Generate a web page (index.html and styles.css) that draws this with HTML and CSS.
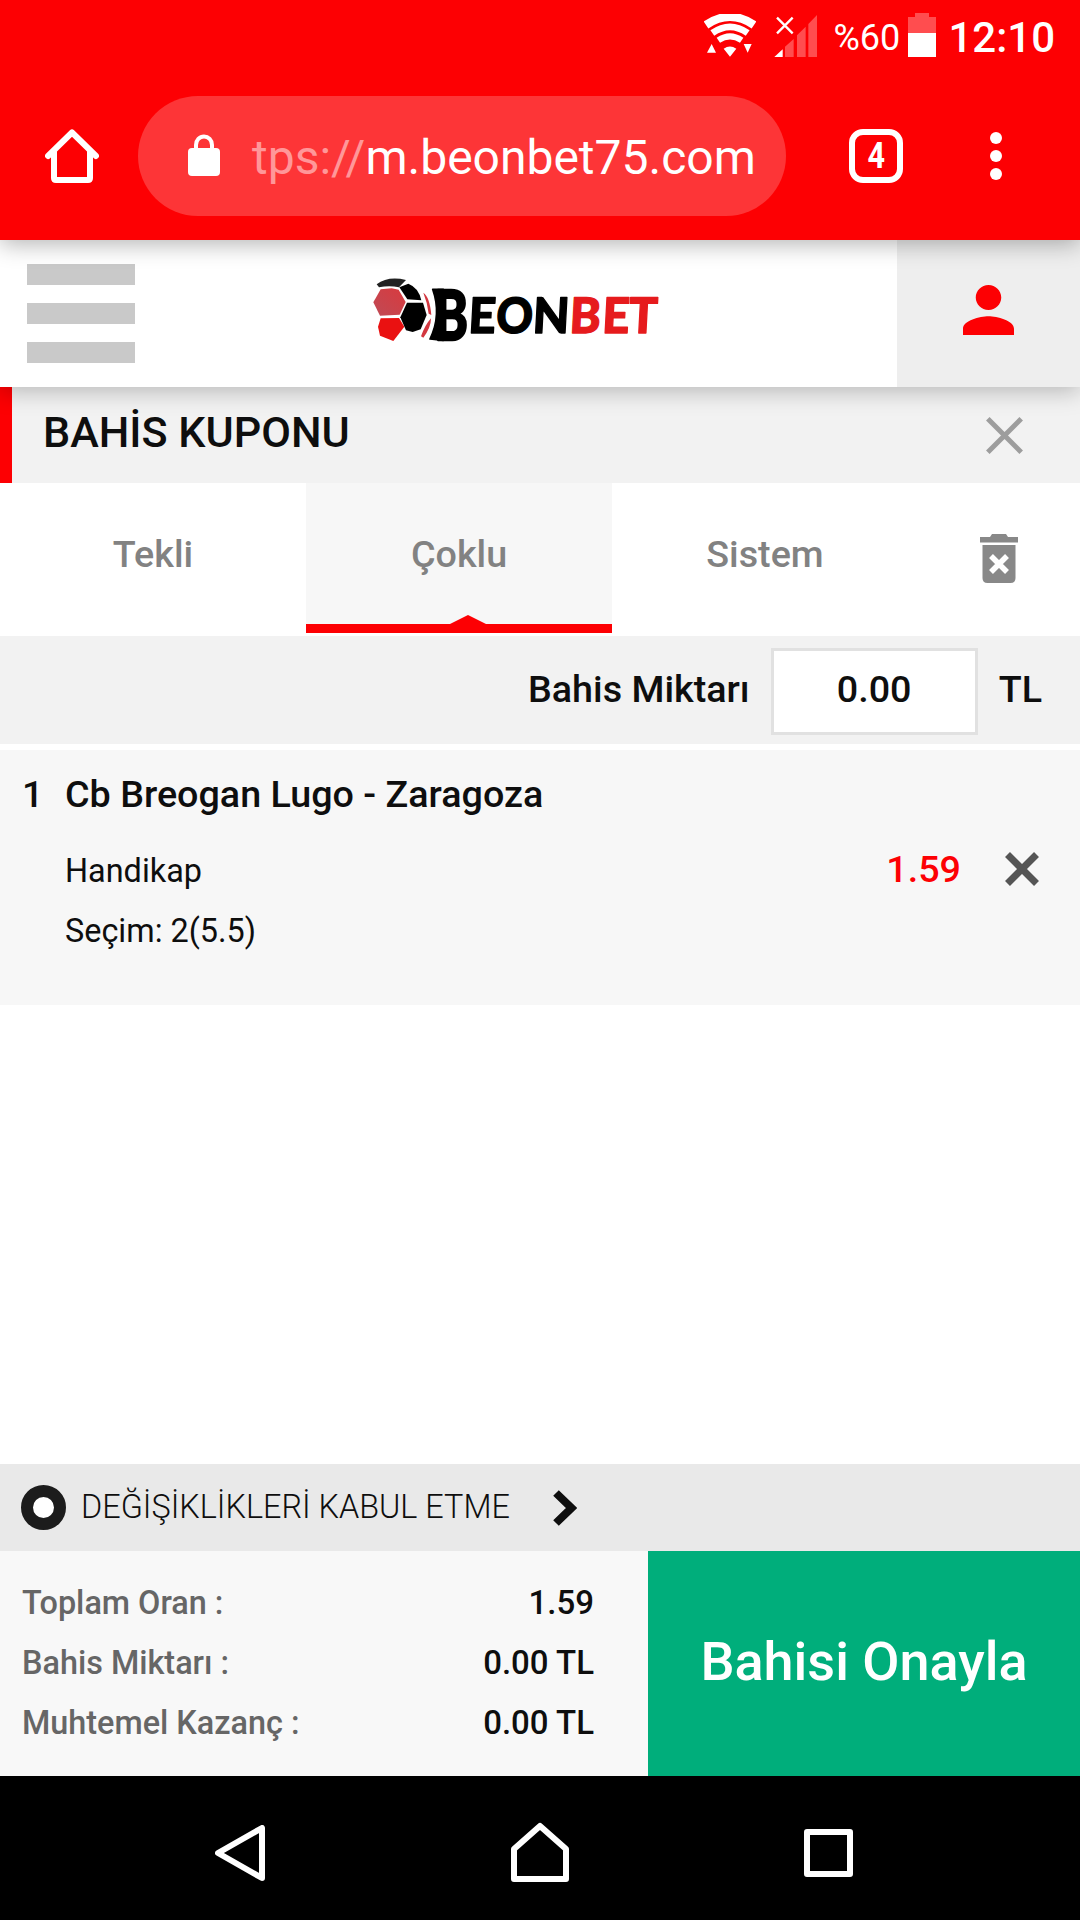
FILE: index.html
```html
<!DOCTYPE html>
<html lang="tr">
<head>
  <meta charset="UTF-8">
  <title>Bahis Kuponu</title>
  <link rel="stylesheet" href="styles.css">
</head>
<body>

<div class="statusbar">
  <svg class="wifi" width="52" height="44" viewBox="0 0 156 132">
    <g fill="none" stroke="#fff">
      <path d="M6 33Q78-16 150 33" stroke-width="25"/>
      <path d="M25 57Q78 20 131 57" stroke-width="20"/>
      <path d="M43 79Q78 55 113 79" stroke-width="18"/>
    </g>
    <path d="M59 104Q78 91 97 104L78 128ZM9 116h27L23 90zM119 90h24l-12 26z" fill="#fff"/>
  </svg>
  <svg class="signal" width="43" height="44" viewBox="0 0 129 132">
    <path d="M33 98 59 75v54H33zM69 64 95 38v91H69zM103 30 129 3v126h-26z" fill="#ff4d4f"/>
    <path d="M1 129 26 106v23z" fill="#fff"/>
    <path d="M9 11 56 58M56 11 9 58" stroke="#fff" stroke-width="7"/>
  </svg>
  <span class="percent">%60</span>
  <svg class="battery" width="28" height="44" viewBox="0 0 28 44">
    <path d="M0 4h7V0h14v4h7v16H0z" fill="#ff4d4f"/>
    <path d="M0 20h28v24H0z" fill="#fff"/>
  </svg>
  <span class="clock">12:10</span>
</div>

<div class="browser">
  <svg class="home" width="54" height="54" viewBox="0 0 54 54" fill="none" stroke="#fff" stroke-width="6" stroke-linejoin="round" stroke-linecap="round">
    <path d="M3 27 27 3.500 51 27"/>
    <path d="M9 22v27q0 2 2 2h32q2 0 2-2V22" stroke-linecap="butt"/>
  </svg>
  <div class="address">
    <svg width="32" height="42" viewBox="0 0 32 42">
      <path d="M8 16V11a8 8.500 0 0 1 16 0v5" fill="none" stroke="#fff" stroke-width="4"/>
      <rect y="14" width="32" height="28" rx="4" fill="#fff"/>
    </svg>
    <div class="url"><span>tps://</span>m.beonbet75.com</div>
  </div>
  <div class="tab-count"><span>4</span></div>
  <div class="dots"><i></i><i></i><i></i></div>
</div>

<div class="header">
  <div class="menu"><i></i><i></i><i></i></div>
  <svg class="logo" width="310" height="90" viewBox="0 0 930 270">
    <defs>
      <linearGradient id="ball" x1="0" y1="1" x2="1" y2="0">
        <stop offset="0" stop-color="#bf4a55"/>
        <stop offset="1" stop-color="#d93a3e"/>
      </linearGradient>
    </defs>
    <path d="M50 58Q84 32 138 45L117 67Q88 60 57 67Z" fill="#222"/>
    <path d="M62 73 95 70 116 74 137 111 119 149 60 152 40 112Z" fill="url(#ball)"/>
    <path d="M62 160 117 159 133 185 100 228 60 212 54 185Z" fill="#ea1111"/>
    <path d="M118 67 145 56Q176 68 184 106L142 103Z"/>
    <path d="M141 113 189 113 200 150 182 193 158 201 138 196 121 157Z"/>
    <path d="M190 83Q209 95 214 150L206 146Q202 112 190 83ZM213 160Q213 188 190 218L183 214Q195 180 213 160Z" fill="#d33740"/>
    <path d="M218 73Q245 150 210 222L250 226V73Z" stroke="#000" stroke-width="5" stroke-linejoin="round"/>
    <g class="word">
      <text x="222" y="225" class="big" textLength="102" lengthAdjust="spacingAndGlyphs">B</text>
      <g transform="translate(8 0) skewX(-3)">
        <text x="326" y="205" textLength="82" lengthAdjust="spacingAndGlyphs">E</text>
        <text x="409" y="205" textLength="110" lengthAdjust="spacingAndGlyphs">O</text>
        <text x="519" y="205" textLength="110" lengthAdjust="spacingAndGlyphs">N</text>
        <g class="red">
          <text x="630" y="205" textLength="93" lengthAdjust="spacingAndGlyphs">B</text>
          <text x="727" y="205" textLength="82" lengthAdjust="spacingAndGlyphs">E</text>
          <text x="807" y="205" textLength="86" lengthAdjust="spacingAndGlyphs">T</text>
        </g>
      </g>
    </g>
  </svg>
  <div class="user">
    <svg width="51" height="50" viewBox="4 4 16 16" preserveAspectRatio="none">
      <path d="M12 12c2.210 0 4-1.790 4-4s-1.790-4-4-4-4 1.790-4 4 1.790 4 4 4zm0 2c-2.670 0-8 1.340-8 4v2h16v-2c0-2.660-5.330-4-8-4z" fill="#fd0003"/>
    </svg>
  </div>
</div>

<div class="title">
  <h1>BAHİS KUPONU</h1>
  <svg width="37" height="37" viewBox="0 0 37 37">
    <path d="M1.800 1.800 35.200 35.200M35.200 1.800 1.800 35.200" stroke="#9d9d9d" stroke-width="5"/>
  </svg>
</div>

<div class="tabs">
  <div class="tab">Tekli</div>
  <div class="tab active">Çoklu</div>
  <div class="tab">Sistem</div>
  <div class="trash">
    <svg width="38" height="49" viewBox="0 0 38 49" fill="#888">
      <path d="M0 3h10l2-3h14l2 3h10v5.500H0z"/>
      <path d="M2.500 11h33v33q0 5-5 5h-23q-5 0-5-5z"/>
      <path d="M11 22 27 38M27 22 11 38" stroke="#fff" stroke-width="5.500"/>
    </svg>
  </div>
</div>

<div class="amount">
  <span>Bahis Miktarı</span>
  <div class="amount-input">0.00</div>
  <span>TL</span>
</div>

<div class="bet">
  <div class="match"><span>1</span>Cb Breogan Lugo - Zaragoza</div>
  <div class="bet-row">
    <span>Handikap</span>
    <b>1.59</b>
    <svg width="34" height="34" viewBox="0 0 34 34">
      <path d="M2.500 2.500 31.500 31.500M31.500 2.500 2.500 31.500" stroke="#555" stroke-width="7"/>
    </svg>
  </div>
  <div class="bet-row"><span>Seçim: 2(5.5)</span></div>
</div>

<div class="changes">
  <i class="radio"></i>
  <span>DEĞİŞİKLİKLERİ KABUL ETME</span>
  <svg width="24" height="36" viewBox="0 0 24 36">
    <path d="M3 3 18.500 18 3 33" fill="none" stroke="#0e0e0e" stroke-width="8"/>
  </svg>
</div>

<div class="bottom">
  <div class="totals">
    <div><span>Toplam Oran :</span><b>1.59</b></div>
    <div><span>Bahis Miktarı :</span><b>0.00 TL</b></div>
    <div><span>Muhtemel Kazanç :</span><b>0.00 TL</b></div>
  </div>
  <div class="confirm">Bahisi Onayla</div>
</div>

<div class="navbar">
  <svg width="50" height="56" viewBox="0 0 50 56"><path d="M47 3v50L3 28z"/></svg>
  <svg class="nav-home" width="58" height="60" viewBox="0 0 58 60"><path d="M3 27 29 4 55 27V57H3z"/></svg>
  <svg width="49" height="48" viewBox="0 0 49 48"><path d="M3 3h43v42H3z"/></svg>
</div>

</body>
</html>
```

FILE: styles.css
```css
* { box-sizing: border-box; }
body { margin: 0; height: 1920px; display: flex; flex-direction: column; background: #fff; color: #0e0e0e; font-family: Roboto, "Noto Sans", sans-serif; overflow: hidden; }
svg { display: block; flex: none; }

.statusbar { height: 72px; padding: 0 25px 0 0; background: #fd0003; color: #fff; display: flex; align-items: flex-start; justify-content: flex-end; position: relative; z-index: 4; }
.statusbar svg { margin-top: 14px; }
.statusbar .battery { margin: 13px 12px 0 10px; }
.statusbar .signal { margin-left: 18px; }
.percent { width: 65px; margin-left: 16px; font-size: 36px; line-height: 42px; padding-top: 17px; white-space: nowrap; }
.clock { font-size: 42px; font-weight: 500; line-height: 50px; padding-top: 13px; }

.browser { height: 168px; padding: 24px 0 24px 45px; background: #fd0003; color: #fff; display: flex; align-items: center; position: relative; z-index: 3; box-shadow: 0 4px 22px rgba(0,0,0,0.3); }
.address { width: 648px; height: 120px; margin-left: 39px; padding-left: 50px; border-radius: 60px; background: #fd3537; display: flex; align-items: center; }
.address svg { margin-top: -2px; }
.url { margin: 3px 0 0 32px; font-size: 48px; line-height: 56px; white-space: nowrap; }
.url span { color: #ff9799; }
.tab-count { width: 54px; height: 54px; margin-left: 63px; border: 6px solid #fff; border-radius: 14px; font-size: 36px; font-weight: 700; line-height: 43px; text-align: center; }
.tab-count span { display: inline-block; transform: scaleX(0.85); }
.dots { margin-left: 87px; display: flex; flex-direction: column; gap: 6px; }
.dots i { width: 12px; height: 12px; border-radius: 50%; background: #fff; }

.header { height: 147px; background: #fff; display: flex; align-items: flex-start; position: relative; z-index: 2; box-shadow: 0 4px 22px rgba(0,0,0,0.25); }
.menu { width: 108px; margin: 24px 0 0 27px; display: flex; flex-direction: column; gap: 18px; }
.menu i { height: 21px; background: #c9c9c9; }
.logo { margin: 25px 0 0 225px; }
.word { font-family: Lato, sans-serif; font-weight: 900; font-size: 147px; stroke: #000; stroke-width: 4px; stroke-linejoin: round; }
.word .big { font-size: 208px; stroke-width: 7px; }
.word .red { fill: #e61b1d; stroke: #e61b1d; }
.user { width: 183px; height: 147px; margin-left: auto; padding: 45px 0 0 66px; background: #eee; }

.title { height: 96px; padding: 0 57px 0 31px; border-left: 12px solid #fd0003; background: #f2f2f2; display: flex; align-items: center; justify-content: space-between; }
.title h1 { margin: -6px 0 0; font-size: 43.1px; font-weight: 500; }

.tabs { height: 153px; display: flex; }
.tab { width: 306px; height: 150px; color: #828282; font-size: 37.7px; font-weight: 500; line-height: 142px; text-align: center; }
.active { position: relative; background: #f7f7f7; border-bottom: 9px solid #fd0003; }
.active::after { content: ""; position: absolute; left: 144px; bottom: 0; border: 18px solid transparent; border-top: 0; border-bottom: 9px solid #fd0003; }
.trash { padding: 51px 0 0 62px; }

.amount { height: 108px; padding: 0 38px 2px 0; background: #f2f2f2; display: flex; align-items: center; justify-content: flex-end; font-size: 37.7px; font-weight: 500; }
.amount-input { width: 207px; height: 87px; margin: 5px 21px 0 21px; border: 3px solid #e1e1e1; background: #fff; line-height: 76px; text-align: center; }

.bet { height: 255px; margin-top: 6px; padding: 14px 41px 0 65px; background: #f7f7f7; }
.match { font-size: 37.7px; font-weight: 500; line-height: 60px; margin-bottom: 16px; }
.match span { display: inline-block; width: 43px; margin-left: -43px; }
.bet-row { height: 60px; display: flex; align-items: center; font-size: 32.4px; }
.bet-row span { padding-top: 2px; }
.bet-row b { margin: -2px 44px 0 auto; color: #fd0003; font-size: 37.7px; font-weight: 500; }
.bet-row svg { margin-top: -3px; }

.changes { height: 87px; margin-top: auto; padding-left: 21px; background: #e9e9e9; display: flex; align-items: center; font-size: 32.4px; font-weight: 300; }
.changes span { margin: -1px 43px 0 15px; }
.radio { width: 45px; height: 45px; border: 12px solid #1c1c1c; border-radius: 50%; background: #fff; }

.bottom { height: 225px; display: flex; }
.totals { width: 648px; padding: 22px 54px 0 22px; background: #f8f8f8; font-size: 33px; font-weight: 500; line-height: 60px; }
.totals div { display: flex; justify-content: space-between; }
.totals span { color: #666; font-size: 32.4px; }
.totals b { font-weight: 500; }
.confirm { flex: 1; background: #00ae7b; color: #fff; font-size: 54px; font-weight: 500; line-height: 221px; text-align: center; }

.navbar { height: 144px; padding: 10px 227px 0 215px; background: #000; display: flex; align-items: center; justify-content: space-between; }
.navbar path { fill: none; stroke: #fff; stroke-width: 6; stroke-linejoin: round; }
.navbar .nav-home { margin: -3px 0 0 10px; }
```
